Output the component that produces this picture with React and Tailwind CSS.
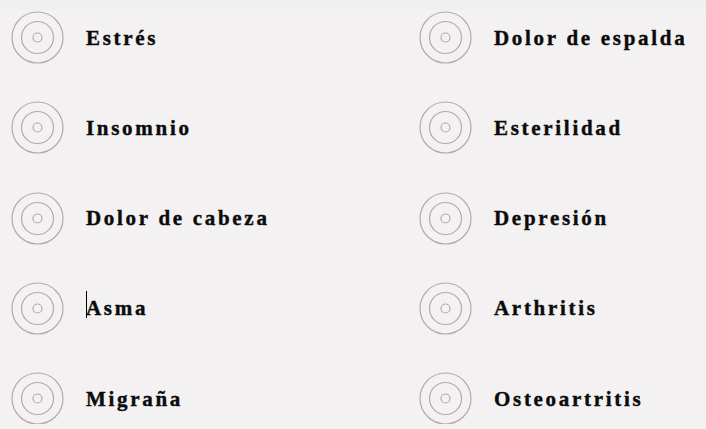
import React from "react";

const leftItems = ["Estrés", "Insomnio", "Dolor de cabeza", "Asma", "Migraña"];
const rightItems = [
  "Dolor de espalda",
  "Esterilidad",
  "Depresión",
  "Arthritis",
  "Osteoartritis",
];

const TargetIcon = () => (
  <svg width="53" height="53" viewBox="0 0 53 53" className="shrink-0">
    <circle cx="26.5" cy="26.5" r="25.5" fill="none" stroke="#b3aaaa" strokeWidth="1.2" />
    <circle cx="26.5" cy="26.5" r="16" fill="none" stroke="#b3aaaa" strokeWidth="1.2" />
    <circle cx="26.5" cy="26.5" r="4.5" fill="none" stroke="#b3aaaa" strokeWidth="1.2" />
  </svg>
);

const Item = ({ label, caret }) => (
  <div className="flex items-center gap-[22px] h-[53px]">
    <TargetIcon />
    <span className="relative pt-[1px] text-[21px] font-bold tracking-[2.7px] text-[#0b0b0b] leading-none font-['Liberation_Serif',serif] whitespace-nowrap [-webkit-text-stroke:0.4px_#0b0b0b]">
      {caret && (
        <span className="absolute left-0 top-[-6px] w-px h-[27px] bg-black" />
      )}
      {label}
    </span>
  </div>
);

export default function App() {
  return (
    <div className="relative w-[706px] h-[429px] bg-[#f4f1f2] overflow-hidden">
      <div className="h-[10px] bg-[#f1f0f0]" />
      <div className="grid grid-cols-[408px_1fr] pl-[11px] pt-[1px]">
        <div className="flex flex-col gap-[37.3px]">
          {leftItems.map(l => (
            <Item key={l} label={l} caret={l === "Asma"} />
          ))}
        </div>
        <div className="flex flex-col gap-[37.3px]">
          {rightItems.map(l => (
            <Item key={l} label={l} />
          ))}
        </div>
      </div>
      <div className="absolute bottom-0 left-0 right-0 h-[5px] bg-[#f3f2f2]" />
    </div>
  );
}
